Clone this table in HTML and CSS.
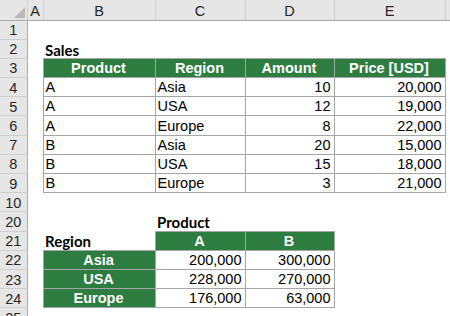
FILE: index.html
```html
<!DOCTYPE html>
<html lang="en">
<head>
  <meta charset="UTF-8">
  <meta name="viewport" content="width=device-width, initial-scale=1.0">
  <title>Sales – Sheet1</title>
  <link rel="stylesheet" href="styles.css">
</head>
<body>

  <table class="sheet">
    <colgroup>
      <col class="c-num">
      <col class="c-a">
      <col class="c-b">
      <col class="c-c">
      <col class="c-d">
      <col class="c-e">
      <col>
    </colgroup>
    <thead>
      <tr class="col-head">
        <th class="corner"><span class="tri"></span></th>
        <th>A</th>
        <th>B</th>
        <th>C</th>
        <th>D</th>
        <th>E</th>
        <th class="rest"></th>
      </tr>
    </thead>
    <tbody>
      <tr><th class="num">1</th><td></td><td></td><td></td><td></td><td></td><td></td></tr>
      <tr><th class="num">2</th><td></td><td class="label">Sales</td><td></td><td></td><td></td><td></td></tr>

      <!-- sales table -->
      <tr>
        <th class="num">3</th><td></td>
        <td class="cell hd">Product</td>
        <td class="cell hd">Region</td>
        <td class="cell hd">Amount</td>
        <td class="cell hd">Price [USD]</td>
        <td></td>
      </tr>
      <tr><th class="num">4</th><td></td><td class="cell">A</td><td class="cell">Asia</td><td class="cell val">10</td><td class="cell val">20,000</td><td></td></tr>
      <tr><th class="num">5</th><td></td><td class="cell">A</td><td class="cell">USA</td><td class="cell val">12</td><td class="cell val">19,000</td><td></td></tr>
      <tr><th class="num">6</th><td></td><td class="cell">A</td><td class="cell">Europe</td><td class="cell val">8</td><td class="cell val">22,000</td><td></td></tr>
      <tr><th class="num">7</th><td></td><td class="cell">B</td><td class="cell">Asia</td><td class="cell val">20</td><td class="cell val">15,000</td><td></td></tr>
      <tr><th class="num">8</th><td></td><td class="cell">B</td><td class="cell">USA</td><td class="cell val">15</td><td class="cell val">18,000</td><td></td></tr>
      <tr><th class="num">9</th><td></td><td class="cell">B</td><td class="cell">Europe</td><td class="cell val">3</td><td class="cell val">21,000</td><td></td></tr>
      <tr><th class="num">10</th><td></td><td></td><td></td><td></td><td></td><td></td></tr>

      <!-- pivot -->
      <tr><th class="num">20</th><td></td><td></td><td class="label">Product</td><td></td><td></td><td></td></tr>
      <tr>
        <th class="num">21</th><td></td>
        <td class="label">Region</td>
        <td class="cell hd">A</td>
        <td class="cell hd">B</td>
        <td></td><td></td>
      </tr>
      <tr><th class="num">22</th><td></td><td class="cell hd">Asia</td><td class="cell val">200,000</td><td class="cell val">300,000</td><td></td><td></td></tr>
      <tr><th class="num">23</th><td></td><td class="cell hd">USA</td><td class="cell val">228,000</td><td class="cell val">270,000</td><td></td><td></td></tr>
      <tr><th class="num">24</th><td></td><td class="cell hd">Europe</td><td class="cell val">176,000</td><td class="cell val">63,000</td><td></td><td></td></tr>
      <tr><th class="num">25</th><td></td><td></td><td></td><td></td><td></td><td></td></tr>
    </tbody>
  </table>

</body>
</html>
```

FILE: styles.css
```css
:root {
  --hdr-bg: #e6e6e6;
  --hdr-line: #cfcfcf;
  --hdr-edge: #ababab;
  --grid: #a6a6a6;
  --green: #2e7d40;
}

* {
  box-sizing: border-box;
  margin: 0;
  padding: 0;
}

body {
  font-family: 'Liberation Sans', Arial, sans-serif;
  font-size: 14.5px;
  color: #000;
  background-color: #fff;
  overflow: hidden;
}

.sheet {
  width: 450px;
  table-layout: fixed;
  border-collapse: collapse;
}

.c-num { width: 27px; }
.c-a { width: 16px; }
.c-b { width: 112px; }
.c-c { width: 90px; }
.c-d { width: 89px; }
.c-e { width: 111px; }

.sheet tr {
  height: 19.2px;
}

.sheet .col-head {
  height: 20px;
}

.sheet th,
.sheet td {
  padding: 0 3px 0 2px;
  line-height: 16px;
  white-space: nowrap;
  overflow: hidden;
  font-weight: normal;
  text-align: left;
}

/* column letters */
.col-head th {
  background-color: var(--hdr-bg);
  color: #262626;
  text-align: center;
  padding: 2px 0 0;
  border-right: 1px solid var(--hdr-line);
  border-bottom: 1px solid var(--hdr-edge);
}

.col-head .rest {
  border-right: none;
}

.corner {
  text-align: right !important;
  vertical-align: bottom;
}

.tri {
  display: inline-block;
  width: 0;
  height: 0;
  margin: 0 2px 2px 0;
  border-left: 11px solid transparent;
  border-bottom: 11px solid #b9b9b9;
  vertical-align: bottom;
}

/* row numbers */
.sheet .num {
  background-color: var(--hdr-bg);
  color: #262626;
  text-align: center;
  padding: 1px 0 0;
  border-bottom: 1px solid var(--hdr-line);
  border-right: 1px solid var(--hdr-edge);
}

/* cells */
.sheet .cell {
  border: 1px solid var(--grid);
}

.sheet .hd {
  background-color: var(--green);
  color: #fff;
  font-weight: bold;
  text-align: center;
}

.sheet .val {
  text-align: right;
}

.sheet .label {
  font-family: Lato, 'Liberation Sans', sans-serif;
  font-weight: bold;
  font-size: 15px;
  padding-top: 2px;
}
```
